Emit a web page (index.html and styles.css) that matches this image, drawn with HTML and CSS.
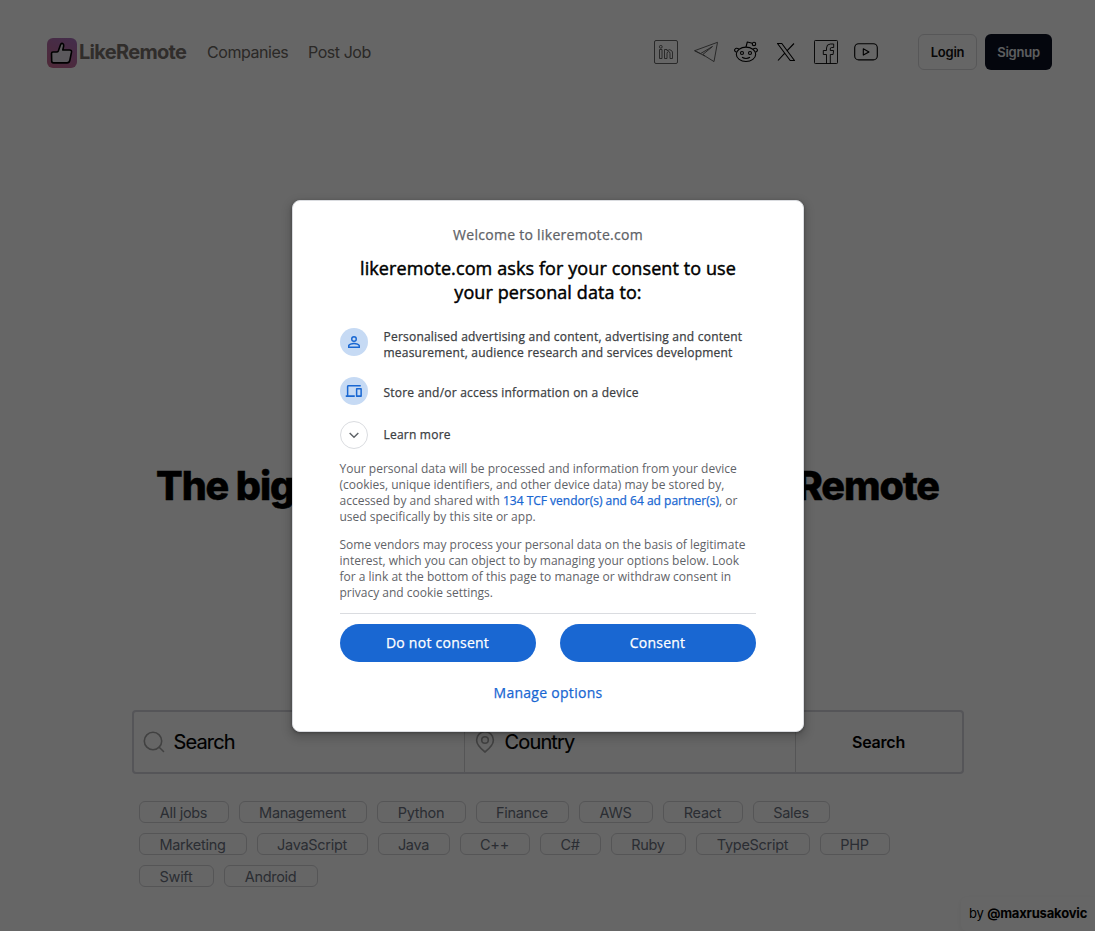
FILE: index.html
```html
<!DOCTYPE html>
<html lang="en">
<head>
<meta charset="utf-8">
<title>LikeRemote</title>
<link rel="stylesheet" href="styles.css">
</head>
<body>
<div class="page">
  <header class="header">
    <a class="brand">
      <svg class="logo" viewBox="0 0 30 30">
        <defs><linearGradient id="lg" x1="0.2" y1="1" x2="0.7" y2="0"><stop offset="0" stop-color="#c4688f"/><stop offset="1" stop-color="#ab70b8"/></linearGradient></defs>
        <rect width="30" height="30" rx="6" fill="url(#lg)"/>
        <path d="M4.500 15.500q0-1.500 1.500-1.500H9.500q1.300 0 1.900-1.200L13.600 6.500q.6-1.500 2-1 1.300.6 1.100 2.300l-.9 4.200H22.500q2.400 0 2 2.200l-1.700 8.300q-.5 2.400-2.800 2.400H6.500q-1.800 0-1.800-1.800z" fill="#e4dfe8" stroke="#000" stroke-width="1.600" stroke-linejoin="round"/>
      </svg>
      <span class="brand-name">LikeRemote</span>
    </a>
    <nav class="nav"><a class="companies">Companies</a><a>Post Job</a></nav>
    <div class="social">
      <svg viewBox="0 0 24 24" class="soft"><rect x=".5" y=".5" width="23" height="23" rx="1.500"/><path d="M5.500 9.500h2.500v9H5.500zM10.500 9.500H13v1.200q3-2.200 5 .3.500.7.500 2v5.500H16v-5q0-2-1.400-2T13 13.500v5h-2.500z"/><circle cx="6.800" cy="6.800" r="1.400"/></svg>
      <svg viewBox="0 0 24 24" class="soft"><path d="M.6 10.700 23.500 2.300 20 21.600l-8.700-5.400zM.6 10.700 6.500 13.600 18.500 6.500 8.800 14.500 11.300 16.200"/></svg>
      <svg viewBox="0 0 24 24" class="strong"><ellipse cx="12" cy="14.300" rx="9.700" ry="7.200"/><path d="M2.700 12.200Q.3 11.800.6 9.700q1.500-2.600 4.200-.7M21.300 12.200q2.400-.4 2.100-2.500-1.500-2.600-4.200-.7M12 7l1.300-5 5 1.200M8 17.300q4 2.400 8 0"/><circle cx="8" cy="13" r="1.500"/><circle cx="16" cy="13" r="1.500"/><circle cx="20" cy="4" r="1.700"/></svg>
      <svg viewBox="0 0 24 24" class="strong"><path d="M3.500 3.500h4.300l12.700 17h-4.300zM20 3.500l-7.300 7.700M10.800 13.200 4 20.500"/></svg>
      <svg viewBox="0 0 24 24" class="strong thin"><rect x=".5" y=".5" width="23" height="23" rx=".8"/><path d="M12.500 23.500V14.500H9.300V10.500h3.200V8q0-4 4-4h3.200v3.500h-2q-1.400 0-1.400 1.400v1.600h3.300l-.5 4h-2.800v9"/></svg>
      <svg viewBox="0 0 24 24" class="strong"><rect x=".7" y="3.700" width="22.600" height="16.200" rx="4"/><path d="m9.300 8.700 5.700 3.200-5.700 3.200z"/></svg>
    </div>
    <div class="auth"><button class="btn login">Login</button><button class="btn signup">Signup</button></div>
  </header>
  <main class="main">
    <h1 class="title"><span>The biggest job</span><span>board for Remote</span></h1>
    <div class="searchbar">
      <div class="field">
        <svg viewBox="0 0 22 22"><circle cx="10" cy="10" r="8.700"/><path d="m16.200 16.200 4.300 4.300"/></svg>
        <span>Search</span>
      </div>
      <div class="field country">
        <svg viewBox="0 0 22 22"><path d="M11 21Q2.600 14.500 2.600 9a8.400 8.400 0 0 1 16.800 0q0 5.500-8.400 12z"/><circle cx="11" cy="9" r="3.300"/></svg>
        <span>Country</span>
      </div>
      <button class="go">Search</button>
    </div>
    <div class="tags">
      <div class="row"><a class="w90">All jobs</a><a class="w128">Management</a><a class="w89">Python</a><a class="w93">Finance</a><a class="w74">AWS</a><a class="w80">React</a><a class="w77">Sales</a></div>
      <div class="row"><a class="w108">Marketing</a><a class="w111">JavaScript</a><a class="w72">Java</a><a class="w70">C++</a><a class="w61">C#</a><a class="w75">Ruby</a><a class="w114">TypeScript</a><a class="w70">PHP</a></div>
      <div class="row"><a class="w75">Swift</a><a class="w94">Android</a></div>
    </div>
  </main>
  <div class="credit">by <b>@maxrusakovic</b></div>
</div>
<div class="overlay">
  <section class="dialog">
    <p class="welcome">Welcome to likeremote.com</p>
    <h2 class="ask">likeremote.com asks for your consent to use<br>your personal data to:</h2>
    <div class="purposes">
      <div class="purpose first">
        <span class="badge"><svg viewBox="0 0 24 24"><path fill-rule="evenodd" d="M12 5.900a2.100 2.100 0 1 1 0 4.200 2.100 2.100 0 0 1 0-4.200m0 9c2.970 0 6.100 1.460 6.100 2.100v1.100H5.900V17c0-.64 3.130-2.100 6.100-2.100M12 4a4 4 0 1 0 0 8 4 4 0 0 0 0-8m0 9c-2.670 0-8 1.340-8 4v3h16v-3c0-2.660-5.330-4-8-4"/></svg></span>
        <span>Personalised advertising and content, advertising and content<br>measurement, audience research and services development</span>
      </div>
      <div class="purpose second">
        <span class="badge"><svg viewBox="0 0 24 24"><path d="M4.500 6H21V4H4.500c-1.100 0-2 .9-2 2v11.500H1V20h12v-2.500H4.500zM21.500 8h-6c-.55 0-1 .45-1 1v10c0 .55.450 1 1 1h6c.55 0 1-.45 1-1V9c0-.55-.45-1-1-1m-1 9.500h-4V10h4z"/></svg></span>
        <span>Store and/or access information on a device</span>
      </div>
      <div class="purpose third">
        <span class="badge outline"><svg viewBox="0 0 24 24"><path d="m6.800 9.500 5.200 5.200 5.200-5.200"/></svg></span>
        <span>Learn more</span>
      </div>
    </div>
    <p class="legal">Your personal data will be processed and information from your device<br>(cookies, unique identifiers, and other device data) may be stored by,<br>accessed by and shared with <a>134 TCF vendor(s) and 64 ad partner(s)</a>, or<br>used specifically by this site or app.</p>
    <p class="legal">Some vendors may process your personal data on the basis of legitimate<br>interest, which you can object to by managing your options below. Look<br>for a link at the bottom of this page to manage or withdraw consent in<br>privacy and cookie settings.</p>
    <div class="actions"><button>Do not consent</button><button>Consent</button></div>
    <a class="manage">Manage options</a>
  </section>
</div>
</body>
</html>
```
FILE: styles.css
```css
* { box-sizing: border-box; }
body { margin: 0; height: 931px; overflow: hidden; background: #fff; font-family: Inter, sans-serif; }
button { font-family: inherit; border: 0; padding: 0; }
.page { height: 931px; display: flex; flex-direction: column; }
.header { height: 104px; padding: 0 43px 0 47px; display: flex; align-items: center; }
.brand { display: flex; align-items: center; width: 160px; gap: 2px; }
.logo { width: 30px; height: 30px; margin-top: 1px; }
.brand-name { font-size: 20px; font-weight: 700; letter-spacing: -.7px; color: #78716c; }
.nav { display: flex; color: #6b6661; font-size: 16px; letter-spacing: -.45px; flex: 1; }
.companies { width: 101px; }
.social { display: flex; gap: 16px; }
.social svg { width: 24px; height: 24px; fill: none; stroke-linejoin: round; overflow: visible; }
.soft { stroke: #555; stroke-width: .9; }
.strong { stroke: #000; stroke-width: 1.100; }
.thin { stroke-width: .9; }
.auth { display: flex; gap: 8px; margin-left: 40px; }
.btn { height: 36px; border-radius: 6px; padding-bottom: 1px; font-size: 13px; font-weight: 600; letter-spacing: -.25px; }
.login { width: 59px; background: #fff; border: 1px solid #d9d9dc; color: #111; }
.signup { width: 67px; background: #0b1022; color: #e8eaee; }
.main { flex: 1; width: 832px; margin: 0 auto; padding-top: 358px; }
.title { display: flex; justify-content: space-between; white-space: nowrap; width: 783px; height: 48px; margin: 0 auto; font-size: 39.500px; line-height: 49px; font-weight: 800; letter-spacing: -1.100px; -webkit-text-stroke: .5px #000; color: #000; }
.searchbar { display: flex; height: 64px; margin-top: 200px; border: 2px solid #d4d4dc; border-radius: 4px; }
.field { width: 331px; padding-left: 9px; display: flex; align-items: center; gap: 9px; border-right: 1px solid #d4d4d8; font-size: 20px; letter-spacing: -.85px; color: #000; -webkit-text-stroke: .15px #000; }
.field svg { width: 22px; height: 22px; fill: none; stroke: #a3a3a3; stroke-width: 1.600; stroke-linecap: round; }
.go { flex: 1; background: none; font-size: 16px; font-weight: 600; color: #000; letter-spacing: -.2px; }
.tags { padding: 27px 7px 0; display: flex; flex-direction: column; gap: 10px; }
.row { display: flex; gap: 10px; }
.row a { height: 22px; border: 1px solid #d4d4d8; border-radius: 6px; font-size: 14.500px; line-height: 22px; letter-spacing: -.3px; text-align: center; color: #6b7280; white-space: nowrap; }
.w61 { width: 61px; } .w70 { width: 70px; } .w72 { width: 72px; } .w74 { width: 74px; } .w75 { width: 75px; }
.w77 { width: 77px; } .w80 { width: 80px; } .w89 { width: 89px; } .w90 { width: 90px; } .w93 { width: 93px; }
.w94 { width: 94px; } .w108 { width: 108px; } .w111 { width: 111px; } .w114 { width: 114px; } .w128 { width: 128px; }
.credit { position: absolute; right: 0; bottom: 0; width: 134px; height: 34px; padding-left: 8px; line-height: 33px; font-size: 13px; letter-spacing: -.18px; color: #000; white-space: nowrap; border-radius: 6px 0 0 6px; box-shadow: 0 2px 6px rgba(0,0,0,.06); }
.credit b { font-weight: 700; }
.overlay { position: absolute; inset: 0; display: flex; justify-content: center; align-items: flex-start; padding: 200px 0 0 1px; background: rgba(0,0,0,.6); }
.dialog { width: 512px; height: 532px; padding: 24px 47px 0; background: #fff; border: 1px solid #dadce0; border-radius: 8px; box-shadow: 0 1px 3px rgba(0,0,0,.3), 0 4px 8px 3px rgba(0,0,0,.15); font-family: "Open Sans", sans-serif; }
.dialog p, .dialog h2 { margin: 0; white-space: nowrap; }
.welcome, .purpose, .legal a, .manage { -webkit-text-stroke: .25px currentColor; }
.dialog .welcome { margin-left: 0; text-align: center; font-size: 14px; line-height: 20px; letter-spacing: .28px; color: #5f6368; }
.dialog .ask { margin: 11px 0 0; text-align: center; font-size: 18px; line-height: 24px; font-weight: 400; letter-spacing: .1px; color: #000; -webkit-text-stroke: .45px #000; }
.purposes { margin-top: 24px; height: 123px; display: flex; flex-direction: column; }
.purpose { display: flex; align-items: flex-start; gap: 15.500px; font-size: 12px; line-height: 16px; letter-spacing: .22px; color: #3c4043; white-space: nowrap; }
.first { height: 49px; }
.second { height: 44px; }
.first > :last-child { padding-top: 1px; }
.second > :last-child { padding-top: 8px; }
.third > :last-child { padding-top: 6px; }
.badge { flex: none; display: flex; align-items: center; justify-content: center; width: 28px; height: 28px; border-radius: 50%; background: #c6daf4; }
.badge svg { width: 18px; height: 18px; fill: #1967d2; }
.outline { background: #fff; border: 1px solid #dadce0; }
.badge.outline svg { width: 20px; height: 20px; fill: none; stroke: #5f6368; stroke-width: 1.700; }
.dialog .legal { margin: 10px 0 12px -.5px; font-size: 12px; line-height: 16px; color: #5f6368; }
.dialog .legal + .legal { margin-top: 12px; }
.legal a { color: #1967d2; }
.actions { display: flex; gap: 24px; padding-top: 10px; border-top: 1px solid #dadce0; }
.actions button { flex: 1; height: 38px; padding: 0 1px 2px 0; border-radius: 19px; background: #1967d2; color: #fff; font-size: 14px; letter-spacing: .25px; -webkit-text-stroke: .25px #fff; }
.manage { display: block; margin: 21px 0 0; text-align: center; font-size: 14px; line-height: 20px; letter-spacing: .28px; color: #1967d2; }
```
